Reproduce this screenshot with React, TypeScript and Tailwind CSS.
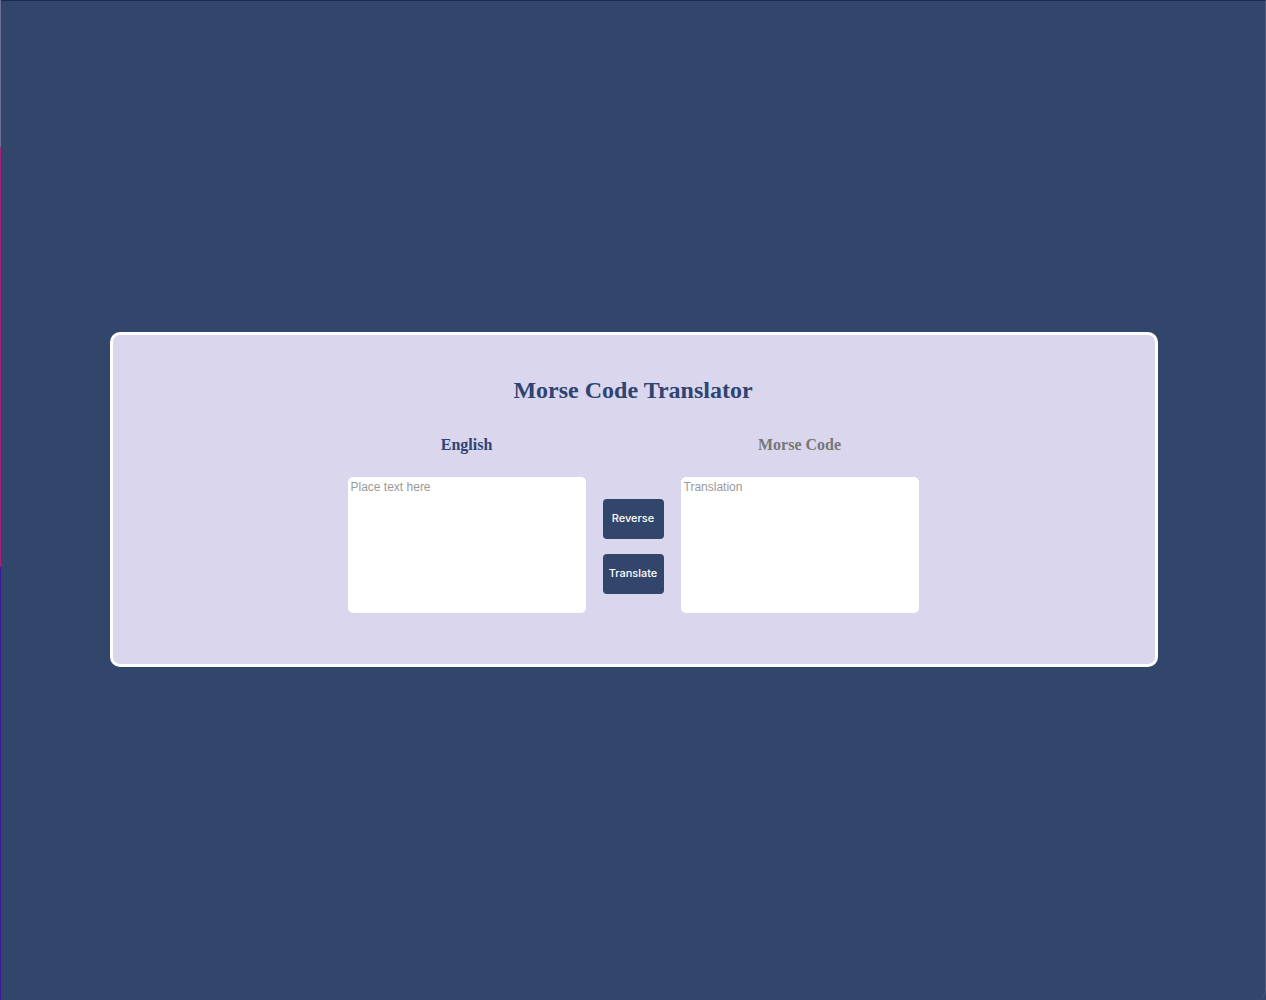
import React from "react";

export default function App() {
  return (
    <div className="flex h-[1000px] w-full bg-[#32456b]">
      <div className="flex w-px flex-col">
        <div className="h-[147px] bg-[#6b7394]" />
        <div className="h-[420px] bg-[#a3237a]" />
        <div className="flex-1 bg-[#3a1c9c]" />
      </div>
      <div className="flex flex-1 items-center justify-center border-t border-r border-t-[#1b2a52] border-r-[#4d5d82] rounded-br-[10px] bg-[#32456b]">
        <div className="mb-[2px] ml-[2px] w-[1048px] rounded-[10px] border-[3px] border-white bg-[#d9d6ee] pt-[41px] pb-[51px] pr-[2px]">
          <h2 className="text-center text-[24px] leading-[28px] font-bold text-[#2f4470] [font-family:'Liberation_Serif','Times_New_Roman',serif]">
            Morse Code Translator
          </h2>
          <div className="mt-[30px] flex items-start justify-center gap-[17px]">
            <div className="flex w-[238px] flex-col items-center">
              <h3 className="text-[16px] leading-[22px] font-bold text-[#2f4470] [font-family:'Liberation_Serif','Times_New_Roman',serif]">
                English
              </h3>
              <textarea
                placeholder="Place text here"
                className="mt-[21px] h-[136px] w-[238px] resize-none rounded-[5px] bg-white px-[3px] py-[2px] text-[12px] leading-[16px] text-[#333] outline-none placeholder:text-[#9a9a9a] [font-family:'Liberation_Sans',Arial,sans-serif]"
              />
            </div>
            <div className="mt-[45px] flex h-[134px] w-[61px] flex-col items-center justify-center gap-[15px]">
              <button className="h-[40px] w-[61px] rounded-[4px] bg-[#32456b] text-[11px] font-medium text-white [font-family:'Inter','Liberation_Sans',sans-serif]">
                Reverse
              </button>
              <button className="h-[40px] w-[61px] rounded-[4px] bg-[#32456b] text-[11px] font-medium text-white [font-family:'Inter','Liberation_Sans',sans-serif]">
                Translate
              </button>
            </div>
            <div className="flex w-[238px] flex-col items-center">
              <h3 className="text-[16px] leading-[22px] font-bold text-[#777777] [font-family:'Liberation_Serif','Times_New_Roman',serif]">
                Morse Code
              </h3>
              <textarea
                placeholder="Translation"
                readOnly
                className="mt-[21px] h-[136px] w-[238px] resize-none rounded-[5px] bg-white px-[3px] py-[2px] text-[12px] leading-[16px] text-[#333] outline-none placeholder:text-[#9a9a9a] [font-family:'Liberation_Sans',Arial,sans-serif]"
              />
            </div>
          </div>
        </div>
      </div>
    </div>
  );
}
